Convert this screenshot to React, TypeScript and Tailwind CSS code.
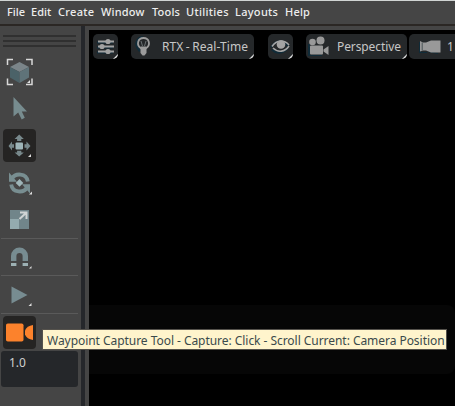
import type { ReactNode } from "react";

const MENUS = [
  { label: "File", box: "w-6" },
  { label: "Edit", box: "w-[27px]" },
  { label: "Create", box: "w-[43px] tracking-[0.3px]" },
  { label: "Window", box: "w-[51px] tracking-[0.2px]" },
  { label: "Tools", box: "w-[34px] tracking-[0.2px]" },
  { label: "Utilities", box: "w-[49px] tracking-[0.3px]" },
  { label: "Layouts", box: "w-[50px] tracking-[0.3px]" },
  { label: "Help", box: "w-8 tracking-[0.2px]" },
];

function Tool({ children, active = false, className = "" }: { children: ReactNode; active?: boolean; className?: string }) {
  return (
    <button className={`ml-[3px] block h-[33px] w-[33px] shrink-0 rounded ${active ? "bg-[#252423]" : ""} ${className}`}>
      <svg width="33" height="33" viewBox="0 0 33 33" className="block">
        {children}
      </svg>
    </button>
  );
}

function Divider() {
  return <div className="ml-px h-px w-[77px] shrink-0 bg-[#5a5a5a]" />;
}

function Pill({ children, className }: { children: ReactNode; className: string }) {
  return (
    <button
      className={`relative flex h-[25px] shrink-0 items-center overflow-hidden rounded-[5px] bg-[#25282a] text-[12px] text-[#c6c6c6] ${className}`}
    >
      {children}
      <svg width="5" height="5" className="absolute right-0 bottom-0">
        <path d="M5 0v5H0z" fill="#e2e2e2" />
      </svg>
    </button>
  );
}

function SlidersIcon() {
  return (
    <svg width="25" height="25" viewBox="0 0 25 25">
      <path d="M4 8.500h16M4 13.500h16M4 18.500h16" stroke="#102b38" strokeWidth="2" />
      <path d="M5 7.500h16M5 12.500h16M5 17.500h16" stroke="#a2a2a2" strokeWidth="2" />
      <g fill="#a2a2a2">
        <circle cx="15" cy="7.500" r="2.600" />
        <circle cx="9" cy="12.500" r="2.600" />
        <circle cx="15" cy="17.500" r="2.600" />
      </g>
    </svg>
  );
}

function BulbIcon() {
  return (
    <svg width="25" height="25" viewBox="0 0 25 25">
      <path d="M9 17C2 10 7 3 12 3.500" fill="none" stroke="#102b38" strokeWidth="2.500" />
      <path d="M10.400 14.500C4.500 11 7 4 12.500 4s8 7 2.100 10.500" fill="none" stroke="#9b9b9b" strokeWidth="1.800" />
      <path d="m10 7 1.500 5M15 7l-1.500 5" stroke="#6b7173" />
      <path d="M9.500 12.500h6v6.500l-2 2.500h-2l-2-2.500z" fill="#9b9b9b" />
    </svg>
  );
}

function EyeIcon() {
  return (
    <svg width="25" height="25" viewBox="0 0 25 25">
      <path d="M3 13.500C8 5.500 15 5.500 20 12M4 15.500c5 5 12 4 16-2" fill="none" stroke="#102b38" strokeWidth="2" />
      <path d="M4 12.500C9 5.500 16 5.500 21 11M5 14c5 5 12 4 16-2" fill="none" stroke="#a4a4a4" strokeWidth="1.600" />
      <circle cx="13" cy="10.500" r="4.300" fill="#a4a4a4" />
    </svg>
  );
}

function MovieIcon() {
  return (
    <svg width="25" height="25" viewBox="0 0 25 25">
      <path d="M2 10h2v11h12v1H2z" fill="#102b38" />
      <g fill="#999">
        <circle cx="6.500" cy="8" r="3.300" />
        <circle cx="14.500" cy="6.500" r="4" />
        <rect x="4" y="11.500" width="13" height="9" rx="1" />
        <path d="m17.500 15.500 5-3.500v9l-5-3.500z" />
      </g>
    </svg>
  );
}

function LensIcon() {
  return (
    <svg width="25" height="25" viewBox="0 0 25 25">
      <path d="M1 8h2v10h6v1H1zM10 17l10 2v1l-10-2z" fill="#102b38" />
      <path d="M2 7 5 8.500h3l5-2h9.500v12H13l-5-2H5l-3 1z" fill="#999" />
      <path d="M4.200 8.500v8" stroke="#4b5557" />
    </svg>
  );
}

export default function App() {
  return (
    <div className="relative flex h-[406px] w-[455px] flex-col overflow-hidden bg-[#454545] font-['Noto_Sans','Open_Sans',sans-serif]">
      <nav className="flex h-[26px] shrink-0 border-t border-b-2 border-t-[#d0d4d3] border-b-[#2b2724] pl-[7px] text-[11px] leading-[22px] font-medium whitespace-nowrap text-[#ededed]">
        {MENUS.map((m) => (
          <div key={m.label} className={`shrink-0 ${m.box}`}>
            {m.label}
          </div>
        ))}
      </nav>

      <div className="flex min-h-0 flex-1">
        <aside className="flex w-[81px] shrink-0 flex-col">
          <div className="mt-[9px] ml-[3px] flex w-[73px] flex-col gap-[3px]">
            <div className="h-0.5 bg-[#303030]" />
            <div className="h-0.5 bg-[#303030]" />
            <div className="h-0.5 bg-[#303030]" />
          </div>
          <Tool className="mt-2">
            <path d="M4.500 10V4.500H10M23 4.500h6V10M29 23.500v6h-6M10 29.500H4.500v-6" fill="none" stroke="#d8d8d8" strokeWidth="1.500" />
            <path d="M7 12l9.500-5L26 12l-9.500 5z" fill="#7b8589" />
            <path d="M7 12l9.500 5v11L7 22.500z" fill="#4b6268" />
            <path d="M26 12l-9.500 5v11l9.500-5.500z" fill="#5f7379" />
            <path d="M27 25v3h-3z" fill="#dedede" />
          </Tool>
          <Tool className="mt-1">
            <path d="M10.500 5v19.500l4.700-4.100 3.500 7 3.100-1.600-3-6.300H24z" fill="#778c8f" />
          </Tool>
          <Tool active className="mt-1">
            <rect x="12.500" y="13.500" width="7.500" height="7" rx="1" fill="#9eb5b8" />
            <path
              d="M16.200 5.500l4.600 4.500h-2.500v2h-4.200v-2h-2.500zM16.200 27.500l4.600-4h-2.500v-1.800h-4.200v1.800h-2.500zM5.500 17l3.500-4.500v2.700h2v3.600H9v2.700zM27.500 17l-4-4.500v2.700h-2v3.600h2v2.700z"
              fill="#78898c"
            />
            <path d="M28 25v3h-3z" fill="#dedede" />
          </Tool>
          <Tool className="mt-1">
            <path d="M9 12.500C12 7 23.500 6.500 24.800 15.500M24 21.500C21 27 9.500 27.500 8.200 18.500" fill="none" stroke="#788e91" strokeWidth="3.800" />
            <path d="M6 6.500v9.200h8zM27 27.500v-9.200h-8z" fill="#788e91" />
            <path d="M16.500 13l3.800 3.900-3.800 3.900-3.800-3.900z" fill="#9eb5b8" />
            <path d="M29 25.500v3h-3z" fill="#dedede" />
          </Tool>
          <Tool className="mt-1">
            <path d="M7 7h19v19H7z" fill="#71858a" />
            <path d="M7 16h9v10H7z" fill="#94abaf" />
            <path d="M17 9.500h6.500v6.500M23.500 9.500l-7 6.500" fill="none" stroke="#d0d4d4" strokeWidth="2" />
          </Tool>
          <div className="h-0.5 shrink-0" />
          <Divider />
          <Tool className="mt-px">
            <path d="M10.700 21v-5a5.800 5.800 0 0 1 11.600 0v5" fill="none" stroke="#778c91" strokeWidth="5.400" />
            <path d="M8 23h5.400v3H8zM19.600 23H25v3h-5.400z" fill="#9db1b4" />
            <path d="M28.500 26v2.500H26z" fill="#dedede" />
          </Tool>
          <div className="h-0.5 shrink-0" />
          <Divider />
          <Tool className="mt-0.5">
            <path d="M8.500 8.500v17L24.500 17z" fill="#778c91" />
            <path d="M28.500 25v3h-3z" fill="#dedede" />
          </Tool>
          <div className="h-0.5 shrink-0" />
          <Divider />
          <Tool active className="mt-0.5">
            <rect x="3" y="7.500" width="17.500" height="18" rx="1.800" fill="#fc822c" />
            <path d="M22 14.500c1-3 4-5 8-5.500v15c-4-.5-7-2.500-8-5.500z" fill="#fc822c" />
          </Tool>
          <div className="mt-0.5 ml-px h-9 w-[77px] shrink-0 rounded-[3px] bg-[#25272a] px-2 pt-[3px] text-[12px] leading-[18px] text-[#d0d0d0]">
            1.0
          </div>
        </aside>
        <div className="w-1 shrink-0 bg-[#25272b]" />

        <main className="flex min-w-0 flex-1 flex-col bg-[#454545] pt-1 pl-1">
          <section className="flex min-h-0 flex-1 flex-col bg-black">
            <div className="flex h-[275px] shrink-0 items-start pt-1 pl-1">
              <Pill className="w-[25px]">
                <SlidersIcon />
              </Pill>
              <Pill className="ml-[13px] w-[123px]">
                <BulbIcon />
                <span className="ml-[6px] tracking-[0.08px] whitespace-nowrap [word-spacing:-0.8px]">RTX - Real-Time</span>
              </Pill>
              <Pill className="ml-[14px] w-[25px]">
                <EyeIcon />
              </Pill>
              <Pill className="ml-[13px] w-[101px]">
                <MovieIcon />
                <span className="ml-[6px] tracking-[-0.1px]">Perspective</span>
              </Pill>
              <Pill className="ml-[2px] w-[70px] pl-[9px]">
                <LensIcon />
                <span className="ml-1">1</span>
              </Pill>
            </div>
            <div className="h-[69px] shrink-0 rounded-r-lg bg-[#060606]" />
          </section>
        </main>
      </div>

      <div
        role="tooltip"
        className="absolute top-[329px] left-[42px] flex h-[21px] w-[405px] items-center border border-[#55524c] bg-[#fff4cc] pt-0.5 pl-1 text-[12px] tracking-[-0.045px] whitespace-nowrap text-[#3b4a4b]"
      >
        Waypoint Capture Tool - Capture: Click - Scroll Current: Camera Position
      </div>
    </div>
  );
}
